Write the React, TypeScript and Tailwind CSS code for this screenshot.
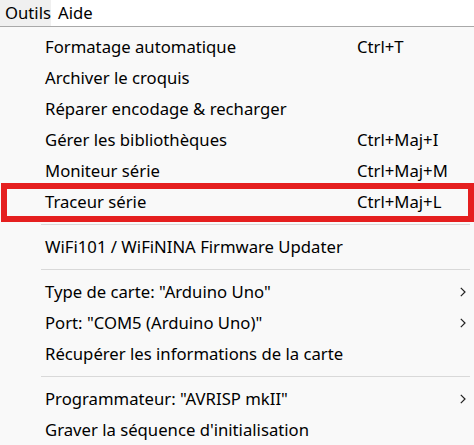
import React from 'react';

type Item = { label: string; shortcut?: string; submenu?: boolean; marked?: boolean };

const groups: Item[][] = [
    [
        { label: 'Formatage automatique', shortcut: 'Ctrl+T' },
        { label: 'Archiver le croquis' },
        { label: 'Réparer encodage & recharger' },
        { label: 'Gérer les bibliothèques', shortcut: 'Ctrl+Maj+I' },
        { label: 'Moniteur série', shortcut: 'Ctrl+Maj+M' },
        { label: 'Traceur série', shortcut: 'Ctrl+Maj+L', marked: true },
    ],
    [{ label: 'WiFi101 / WiFiNINA Firmware Updater' }],
    [
        { label: 'Type de carte: "Arduino Uno"', submenu: true },
        { label: 'Port: "COM5 (Arduino Uno)"', submenu: true },
        { label: 'Récupérer les informations de la carte' },
    ],
    [
        { label: 'Programmateur: "AVRISP mkII"', submenu: true },
        { label: "Graver la séquence d'initialisation" },
    ],
];

function Chevron() {
    return (
        <svg width="6" height="10" viewBox="0 0 6 10" className="text-[#222]">
            <path d="M0.8 0.8 L5 5 L0.8 9.2" fill="none" stroke="currentColor" strokeWidth="1.2" />
        </svg>
    );
}

function MenuRow({ item }: { item: Item }) {
    return (
        <div className="relative flex h-[31px] items-center pl-[45px] pr-[8px]">
            <span className="flex-1 whitespace-nowrap">{item.label}</span>
            {item.shortcut && <span className="w-[109px] whitespace-nowrap">{item.shortcut}</span>}
            {item.submenu && <Chevron />}
            {/* cadre rouge autour de l'entrée en question */}
            {item.marked && (
                <div className="absolute left-[1px] right-0 top-[-3px] bottom-[-5px] border-[6px] border-[#e51f1f]" />
            )}
        </div>
    );
}

export default function App() {
    return (
        <div
            className="w-[474px] h-[445px] overflow-hidden bg-white text-[16.7px] text-black"
            style={{ fontFamily: '"Noto Sans", "Open Sans", sans-serif' }}
        >
            <div className="flex h-[27px] border-b border-[#a9a9a9] bg-white">
                <div className="flex items-center bg-[#f0f0f0] pl-[5px] pr-0">Outils</div>
                <div className="flex items-center pl-[7px]">Aide</div>
            </div>
            <div className="bg-[#f9f9f9] pt-[4px] h-[418px]">
                {groups.map((group, gi) => (
                    <div key={gi}>
                        {gi > 0 && (
                            <div className="flex h-[14px] items-center pl-[41px] pr-[4px]">
                                <div className="h-px w-full bg-[#d9d9d9]" />
                            </div>
                        )}
                        {group.map((item) => (
                            <MenuRow key={item.label} item={item} />
                        ))}
                    </div>
                ))}
            </div>
        </div>
    );
}
